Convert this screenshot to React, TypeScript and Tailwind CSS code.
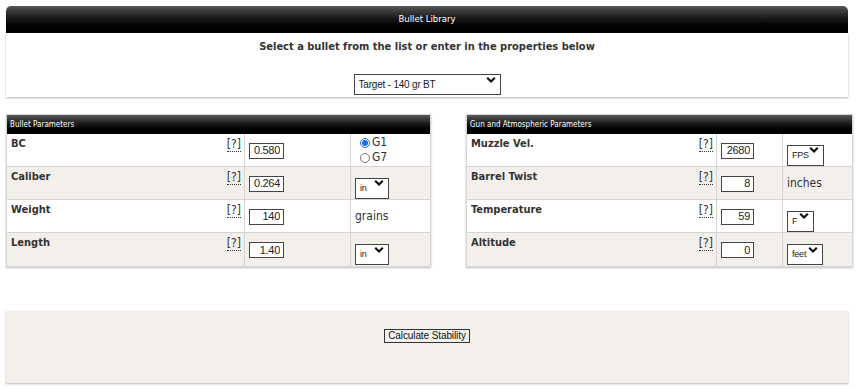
import React from "react";

const narrow = "font-['Liberation_Sans',Arial,sans-serif]";
const cond = "font-['DejaVu_Sans_Condensed','DejaVu_Sans',sans-serif]";

function Chevron() {
  return (
    <svg width="10" height="7" viewBox="0 0 10 7" className="pointer-events-none absolute right-[5px] top-1/2 -translate-y-1/2">
      <path d="M1.2 1.2 5 5 8.8 1.2" fill="none" stroke="#111" strokeWidth="2.2" />
    </svg>
  );
}

function Select({ value, w, text = "text-[9px]" }: { value: string; w: string; text?: string }) {
  return (
    <div className={`relative ${w} h-[21px]`}>
      <select
        defaultValue={value}
        className={`h-full w-full appearance-none border border-[#444] bg-white pl-[4px] ${text} tracking-[-0.2px] text-[#222] ${narrow} outline-none`}
      >
        <option>{value}</option>
      </select>
      <Chevron />
    </div>
  );
}

function Help() {
  return (
    <span className={`mr-[3px] mt-[1px] self-start border-b border-dotted border-[#333] text-[12px] leading-[14px] text-[#333] ${cond}`}>[?]</span>
  );
}

function Num({ v, w }: { v: string; w: string }) {
  return (
    <input
      defaultValue={v}
      className={`${w} h-[16px] border border-[#444] bg-white pr-[3px] text-right text-[11px] tracking-[-0.3px] text-[#222] ${narrow} outline-none`}
    />
  );
}

type Row = { label: string; value: string; unit: React.ReactNode };

function Table({ title, rows, w, labelW, inputW, numW }: { title: string; rows: Row[]; w: string; labelW: string; inputW: string; numW: string }) {
  return (
    <div className={`${w} border border-[#d6d6d6] bg-white shadow-[0_1px_2px_rgba(0,0,0,0.25)]`}>
      <div className={`flex h-[19px] items-center bg-gradient-to-b from-[#5a5a5a] via-[#151515] to-black pl-[3px] text-[8px] text-white ${cond}`}>
        {title}
      </div>
      {rows.map((r, i) => (
        <div key={r.label} className={`flex h-[33px] ${i < rows.length - 1 ? "border-b border-[#d4d4d4]" : ""} ${i % 2 ? "bg-[#f3f0eb]" : "bg-white"}`}>
          <div className={`${labelW} flex items-start justify-between border-r border-[#d4d4d4] pl-[4px] pt-[2px]`}>
            <span className={`text-[11px] font-bold text-[#333] ${cond}`}>{r.label}</span>
            <Help />
          </div>
          <div className={`${inputW} flex items-center border-r border-[#d4d4d4] pl-[4px] pt-[1px]`}>
            <Num v={r.value} w={numW} />
          </div>
          <div className="flex flex-1 items-center pl-[4px]">{r.unit}</div>
        </div>
      ))}
    </div>
  );
}

const unitText = `text-[12px] text-[#333] ${cond}`;

export default function App() {
  const bullet: Row[] = [
    {
      label: "BC",
      value: "0.580",
      unit: (
        <div className={`flex flex-col pl-[5px] leading-[15px] ${unitText}`}>
          <label className="flex items-center gap-[2px]">
            <input type="radio" name="g" defaultChecked className="h-[10px] w-[10px] accent-[#1d6ff2]" />
            G1
          </label>
          <label className="flex items-center gap-[2px]">
            <input type="radio" name="g" className="h-[10px] w-[10px]" />
            G7
          </label>
        </div>
      ),
    },
    { label: "Caliber", value: "0.264", unit: <Select value="in" w="w-[34px]" /> },
    { label: "Weight", value: "140", unit: <span className={unitText}>grains</span> },
    { label: "Length", value: "1.40", unit: <Select value="in" w="w-[34px]" /> },
  ];
  const gun: Row[] = [
    { label: "Muzzle Vel.", value: "2680", unit: <Select value="FPS" w="w-[37px]" /> },
    { label: "Barrel Twist", value: "8", unit: <span className={unitText}>inches</span> },
    { label: "Temperature", value: "59", unit: <Select value="F" w="w-[27px]" /> },
    { label: "Altitude", value: "0", unit: <Select value="feet" w="w-[36px]" /> },
  ];

  return (
    <div className="min-h-[389px] bg-white pt-[6px]">
      <div className="ml-[6px] w-[842px]">
        <div className={`flex h-[27px] items-center justify-center rounded-t-[5px] bg-gradient-to-b from-[#555] via-[#141414] to-black text-[9.5px] text-white ${cond}`}>
          Bullet Library
        </div>
        <div className="flex h-[64px] flex-col items-center bg-white pt-[6px] shadow-[0_1px_2px_rgba(0,0,0,0.3)]">
          <div className={`text-[11px] font-bold text-[#333] ${cond}`}>Select a bullet from the list or enter in the properties below</div>
          <div className="mt-[14px]">
            <Select value="Target - 140 gr BT" w="w-[147px]" text="text-[10px]" />
          </div>
        </div>
      </div>

      <div className="mt-[17px] flex items-start">
        <div className="ml-[6px]">
          <Table title="Bullet Parameters" rows={bullet} w="w-[425px]" labelW="w-[238px]" inputW="w-[106px]" numW="w-[35px]" />
        </div>
        <div className="ml-[35px]">
          <Table title="Gun and Atmospheric Parameters" rows={gun} w="w-[387px]" labelW="w-[250px]" inputW="w-[66px]" numW="w-[33px]" />
        </div>
      </div>

      <div className="ml-[6px] mt-[44px] flex h-[72px] w-[842px] justify-center bg-[#f3f0eb] pt-[18px] shadow-[0_1px_2px_rgba(0,0,0,0.3)]">
        <button className={`h-[14px] w-[86px] whitespace-nowrap border border-[#333] bg-[#f3f1ed] text-[10px] leading-[12px] tracking-[-0.1px] text-[#111] ${narrow}`}>
          Calculate Stability
        </button>
      </div>
    </div>
  );
}
